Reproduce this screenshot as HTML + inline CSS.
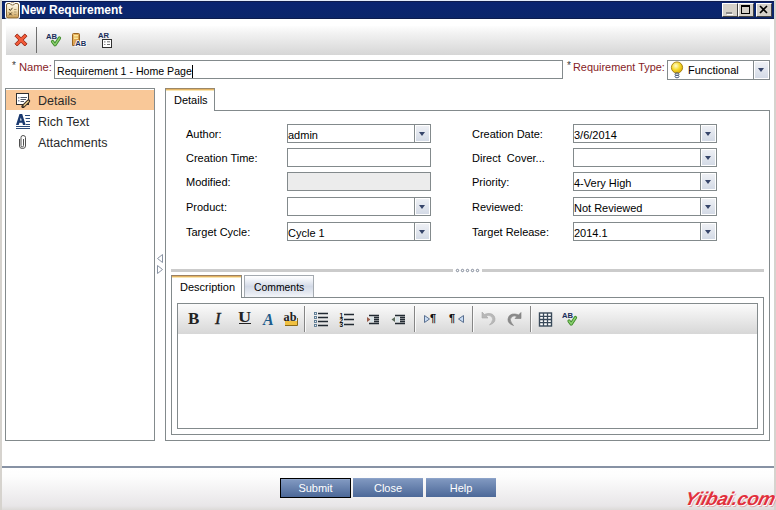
<!DOCTYPE html>
<html><head><meta charset="utf-8">
<style>
*{box-sizing:border-box;margin:0;padding:0}
html,body{width:776px;height:510px;overflow:hidden;background:#fff}
body{position:relative;font-family:"Liberation Sans",sans-serif;font-size:11px;color:#000}
.a{position:absolute}
.t{position:absolute;white-space:pre;line-height:11px}
.box{position:absolute;border:1px solid #838a8c;background:#fff}
.dd{position:absolute;top:0;right:0;width:16px;height:100%;border-left:1px solid #838a8c;background:linear-gradient(#f0f2f6,#d2d9e5);box-shadow:inset 0 0 0 1px #fff}
.dd:after{content:"";position:absolute;left:4px;top:7px;border-left:3.5px solid transparent;border-right:3.5px solid transparent;border-top:4px solid #36456a}
.lbl{position:absolute;white-space:pre;line-height:11px;color:#000}
.val{position:absolute;left:0px;top:5px;white-space:pre;line-height:11px}
.sep{position:absolute;width:1px;background:#6e6e6e}
.btn{position:absolute;top:478px;height:19px;width:70px;background:linear-gradient(#98acd0 0,#8098c0 1px,#4c6898);color:#fff;text-align:center;line-height:18px;padding-top:1px;font-size:11px}
</style></head><body>
<!-- window frame -->
<div class="a" style="left:0;top:0;width:2px;height:510px;background:#d6d3ce"></div>
<div class="a" style="left:774px;top:0;width:2px;height:510px;background:#d6d3ce"></div>
<!-- title bar -->
<div class="a" style="left:2px;top:0;width:772px;height:1px;background:#e4ecfa"></div>
<div class="a" style="left:2px;top:1px;width:772px;height:18px;background:linear-gradient(#101c4c 0,#101c4c 1px,#0a2470 1px,#0a2470 3px,#0b266a 17px,#0c1c4c 17px)"></div>
<div class="a" style="left:5px;top:2px;width:15px;height:16px;border:1px solid #fff;border-radius:2px;background:linear-gradient(#f4e8c8,#c8a868)"></div>
<div class="t" style="left:21px;top:4px;color:#fff;font-weight:bold;font-size:12px;line-height:12px">New Requirement</div>
<div class="a" style="left:722px;top:3px;width:16px;height:14px;background:#d4d0c8;border:1px solid;border-color:#fff #404040 #404040 #fff"></div>
<div class="a" style="left:738px;top:3px;width:16px;height:14px;background:#d4d0c8;border:1px solid;border-color:#fff #404040 #404040 #fff"></div>
<div class="a" style="left:756px;top:3px;width:16px;height:14px;background:#d4d0c8;border:1px solid;border-color:#fff #404040 #404040 #fff"></div>

<!-- toolbar -->
<div class="a" style="left:6px;top:26px;width:764px;height:29px;background:linear-gradient(#fdfdfd,#f2f2f2 25%,#d6d6d6)"></div>
<div class="sep" style="left:36px;top:27px;height:26px"></div>

<!-- name row -->
<div class="t" style="left:12px;top:61px;font-size:10px;line-height:9px;color:#3a3a3a">*</div><div class="t" style="left:19px;top:62px;color:#861c26;font-size:11.2px;line-height:11px">Name:</div>
<div class="box" style="left:54px;top:60px;width:509px;height:19px"><div class="val" style="left:2px;top:4px;font-size:10.6px">Requirement 1 - Home Page<span style="display:inline-block;width:1px;height:13px;background:#000;vertical-align:-3px;margin-left:0.5px"></span></div></div>
<div class="t" style="left:567px;top:61px;font-size:10px;line-height:9px;color:#3a3a3a">*</div><div class="t" style="left:573px;top:62px;color:#861c26;font-size:10.9px;line-height:11px">Requirement Type:</div>
<div class="box" style="left:667px;top:60px;width:103px;height:20px"><div class="val" style="left:20px;top:4px">Functional</div><div class="dd"></div></div>

<!-- left panel -->
<div class="box" style="left:5px;top:88px;width:150px;height:353px"></div>
<div class="a" style="left:6px;top:90px;width:148px;height:20px;background:#f9c898"></div>
<div class="t" style="left:38px;top:95px;font-size:12.5px;line-height:12px;color:#2a2a2a">Details</div>
<div class="t" style="left:38px;top:116px;font-size:12.5px;line-height:12px;color:#2a2a2a">Rich Text</div>
<div class="t" style="left:38px;top:137px;font-size:12.5px;line-height:12px;color:#2a2a2a">Attachments</div>

<!-- content panel -->
<div class="a" style="left:165px;top:110px;width:605px;height:331px;border:1px solid #838a8c"></div>
<div class="a" style="left:165px;top:88px;width:50px;height:23px;border:1px solid #838a8c;border-bottom:none;border-top-color:#9c8868;background:#fff;box-shadow:inset 0 1px 0 #e4b464,inset 0 2px 0 #f8e6b4"></div>
<div class="t" style="left:174px;top:95px">Details</div>

<!-- title icons -->
<svg class="a" style="left:4px;top:1px" width="17" height="18" viewBox="0 0 17 18">
<rect x="1" y="1" width="15" height="17" rx="2.5" fill="#fff"/>
<defs><linearGradient id="cg" x1="0" y1="0" x2="0" y2="1"><stop offset="0" stop-color="#fffaf0"/><stop offset="0.5" stop-color="#f0dcb0"/><stop offset="1" stop-color="#c89a50"/></linearGradient></defs>
<path d="M2.5 4 Q2.5 2.5 4 2.5 L6 2.5 Q6.5 4 8.5 4 Q10.5 4 11 2.5 L13 2.5 Q14.5 2.5 14.5 4 L14.5 15.5 Q14.5 17 13 17 L4 17 Q2.5 17 2.5 15.5 Z" fill="url(#cg)" stroke="#7a5a28" stroke-width="0.9"/>
<path d="M6.2 2.5 Q6.5 1.5 8.5 1.5 Q10.5 1.5 10.8 2.5" fill="#fff" stroke="#7a5a28" stroke-width="0.6"/>
<path d="M5 8 L6.3 9.5 L8.5 6.8 M5 11.5 L7.8 14.3 M7.8 11.5 L5 14.3" stroke="#4a3a20" stroke-width="1" fill="none"/>
<path d="M10 8.5 H12.5 M10 11 H12.5 M10 13.5 H12.5" stroke="#b09a70" stroke-width="1"/>
</svg>
<svg class="a" style="left:722px;top:3px" width="16" height="14" viewBox="0 0 16 14"><rect x="4" y="9" width="6" height="2" fill="#8c8c8c"/><rect x="5" y="11" width="6" height="1" fill="#fff"/></svg>
<svg class="a" style="left:738px;top:3px" width="16" height="14" viewBox="0 0 16 14"><rect x="3.5" y="2.5" width="8" height="8" fill="none" stroke="#000"/><rect x="3" y="2" width="9" height="2" fill="#000"/></svg>
<svg class="a" style="left:756px;top:3px" width="16" height="14" viewBox="0 0 16 14"><path d="M4 3 L11 10 M11 3 L4 10" stroke="#000" stroke-width="1.6"/></svg>

<!-- toolbar icons -->
<svg class="a" style="left:13px;top:32px" width="16" height="16" viewBox="0 0 16 16">
<path d="M2 4.2 L4.2 2 L8 5.8 L11.8 2 L14 4.2 L10.2 8 L14 11.8 L11.8 14 L8 10.2 L4.2 14 L2 11.8 L5.8 8 Z" fill="#f25a38" stroke="#9a2a18" stroke-width="1" stroke-linejoin="round"/>
</svg>
<svg class="a" style="left:44px;top:30px" width="20" height="20" viewBox="0 0 20 20">
<text x="2" y="8.8" font-family="Liberation Sans" font-size="7.6" font-weight="bold" fill="#1a2e5a" textLength="11" lengthAdjust="spacingAndGlyphs">AB</text>
<path d="M8.5 11.5 L11 14.8 L15.5 8" fill="none" stroke="#3c8a28" stroke-width="3.2" stroke-linecap="round" stroke-linejoin="round"/>
<path d="M8.5 11.5 L11 14.8 L15.5 8" fill="none" stroke="#8cd070" stroke-width="1.4" stroke-linecap="round" stroke-linejoin="round"/>
</svg>
<svg class="a" style="left:68px;top:30px" width="20" height="20" viewBox="0 0 20 20">
<defs><linearGradient id="dg" x1="0" y1="0" x2="1" y2="1"><stop offset="0" stop-color="#f0c070"/><stop offset="1" stop-color="#c88830"/></linearGradient></defs>
<path d="M4.5 15.5 L4.5 4.5 Q4.5 3.5 5.5 3.5 L10.5 3.5 Q11.5 3.5 11.5 4.5 L11.5 15.5 Z" fill="url(#dg)" stroke="#9a6420" stroke-width="1"/>
<path d="M6 5.5 H10 M6 7 H10 M6 8.5 H10" stroke="#fff0a0" stroke-width="0.9"/>
<text x="7.2" y="16.2" font-family="Liberation Sans" font-size="7.6" font-weight="bold" fill="#1a2e5a" stroke="#fff" stroke-width="1.6" paint-order="stroke" textLength="11" lengthAdjust="spacingAndGlyphs">AB</text>
</svg>
<svg class="a" style="left:95px;top:30px" width="20" height="20" viewBox="0 0 20 20">
<text x="3" y="7.8" font-family="Liberation Sans" font-size="7" font-weight="bold" fill="#1a2e5a" textLength="11" lengthAdjust="spacingAndGlyphs">AR</text>
<rect x="7.5" y="9.5" width="9" height="8" fill="#fff" stroke="#303030" stroke-width="1"/>
<path d="M9 11.8 H10.5 M9 14.5 H10.5" stroke="#909090" stroke-width="1.2"/>
<path d="M12 11.8 H15 M12 14.5 H15" stroke="#707070" stroke-width="1"/>
</svg>

<!-- left panel icons -->
<svg class="a" style="left:15px;top:92px" width="16" height="16" viewBox="0 0 16 16">
<rect x="1.5" y="1.5" width="12" height="11" fill="#fff" stroke="#303030" stroke-width="1"/>
<rect x="3" y="5" width="1.5" height="1.5" fill="#8a94a8"/><rect x="3" y="8" width="1.5" height="1.5" fill="#8a94a8"/>
<path d="M5.5 5.5 H12 M5.5 7.5 H11 M5.5 9.5 H9" stroke="#404a5a" stroke-width="0.9"/>
<path d="M8 14.5 L13.5 9" stroke="#3a2a20" stroke-width="3.2" stroke-linecap="round"/>
<path d="M8.3 14.2 L13.3 9.2" stroke="#e8d090" stroke-width="1.4" stroke-linecap="round"/>
<path d="M7 15.5 L8.2 13.2 L9.2 14.2 Z" fill="#202020"/>
</svg>
<svg class="a" style="left:15px;top:113px" width="16" height="16" viewBox="0 0 16 16">
<path d="M1 12 L4.5 1 L7.2 1 L10.7 12 L8 12 L7.3 9.8 L4.4 9.8 L3.7 12 Z M5 7.6 L6.7 7.6 L5.85 4.6 Z" fill="#1a3a70" fill-rule="evenodd"/>
<path d="M10 2.5 H15 M10.5 5.5 H15 M11 8.5 H15 M11 11.5 H15" stroke="#2a4a7a" stroke-width="1"/>
<path d="M1 13.5 H15 M1 15.5 H15" stroke="#2a4a7a" stroke-width="1"/>
</svg>
<svg class="a" style="left:17px;top:134px" width="11" height="16" viewBox="0 0 11 16">
<path d="M6.5 5 L6.5 11.5 Q6.5 13 5.2 13 Q4 13 4 11.5 L4 3.5 Q4 1.5 6 1.5 Q8.5 1.5 8.5 3.5 L8.5 12 Q8.5 14.5 5.5 14.5 Q2.5 14.5 2.5 12 L2.5 5" fill="none" stroke="#505050" stroke-width="1"/>
</svg>

<!-- bulb -->
<svg class="a" style="left:670px;top:61px" width="15" height="18" viewBox="0 0 15 18">
<defs><radialGradient id="bg" cx="0.4" cy="0.35" r="0.7"><stop offset="0" stop-color="#fffbd0"/><stop offset="0.5" stop-color="#f8dc30"/><stop offset="1" stop-color="#d8a800"/></radialGradient></defs>
<circle cx="7" cy="6.5" r="5.6" fill="url(#bg)" stroke="#a07a10" stroke-width="0.9"/>
<ellipse cx="7" cy="13.2" rx="2" ry="1.3" fill="none" stroke="#4a5a7a" stroke-width="1"/>
<ellipse cx="7" cy="15.5" rx="2" ry="1.3" fill="none" stroke="#4a5a7a" stroke-width="1"/>
</svg>

<!-- form -->
<div class="lbl" style="left:186px;top:129px">Author:</div>
<div class="box" style="left:287px;top:124px;width:144px;height:19px;"><div class="val">admin</div><div class="dd"></div></div>
<div class="lbl" style="left:186px;top:153px">Creation Time:</div>
<div class="box" style="left:287px;top:148px;width:144px;height:19px;"></div>
<div class="lbl" style="left:186px;top:177px">Modified:</div>
<div class="box" style="left:287px;top:172px;width:144px;height:19px;background:#ececec;"></div>
<div class="lbl" style="left:186px;top:202px">Product:</div>
<div class="box" style="left:287px;top:197px;width:144px;height:19px;"><div class="dd"></div></div>
<div class="lbl" style="left:186px;top:227px">Target Cycle:</div>
<div class="box" style="left:287px;top:222px;width:144px;height:19px;"><div class="val">Cycle 1</div><div class="dd"></div></div>
<div class="lbl" style="left:472px;top:129px">Creation Date:</div>
<div class="box" style="left:573px;top:124px;width:144px;height:19px"><div class="val">3/6/2014</div><div class="dd"></div></div>
<div class="lbl" style="left:472px;top:153px">Direct  Cover...</div>
<div class="box" style="left:573px;top:148px;width:144px;height:19px"><div class="dd"></div></div>
<div class="lbl" style="left:472px;top:177px">Priority:</div>
<div class="box" style="left:573px;top:172px;width:144px;height:19px"><div class="val">4-Very High</div><div class="dd"></div></div>
<div class="lbl" style="left:472px;top:202px">Reviewed:</div>
<div class="box" style="left:573px;top:197px;width:144px;height:19px"><div class="val">Not Reviewed</div><div class="dd"></div></div>
<div class="lbl" style="left:472px;top:227px">Target Release:</div>
<div class="box" style="left:573px;top:222px;width:144px;height:19px"><div class="val">2014.1</div><div class="dd"></div></div>

<!-- splitter -->
<svg class="a" style="left:156px;top:253px" width="8" height="22" viewBox="0 0 8 22"><path d="M6.5 1.5 L1.5 5.5 L6.5 9.5 Z M1.5 12.5 L6.5 16.5 L1.5 20.5 Z" fill="none" stroke="#8a94a4" stroke-width="1"/></svg>
<div class="a" style="left:171px;top:269px;width:282px;height:3px;background:#cbcbcb"></div>
<div class="a" style="left:482px;top:269px;width:282px;height:3px;background:#cbcbcb"></div>
<svg class="a" style="left:455px;top:268px" width="26" height="6" viewBox="0 0 26 6"><g fill="none" stroke="#7c8494" stroke-width="1"><circle cx="2.5" cy="2.5" r="1.2"/><circle cx="7.5" cy="2.5" r="1.2"/><circle cx="12.5" cy="2.5" r="1.2"/><circle cx="17.5" cy="2.5" r="1.2"/><circle cx="22.5" cy="2.5" r="1.2"/></g></svg>

<!-- lower tabs -->
<div class="a" style="left:171px;top:297px;width:593px;height:138px;border:1px solid #838a8c"></div>
<div class="a" style="left:244px;top:275px;width:70px;height:22px;border:1px solid #a4aab0;border-bottom:none;background:linear-gradient(#ffffff 0%,#f4f6fa 15%,#d2d9e6 50%,#e8ecf3 85%,#f4f6f9 100%)"></div>
<div class="a" style="left:171px;top:275px;width:71px;height:23px;border:1px solid #838a8c;border-bottom:none;border-top-color:#9c8060;background:#fff;box-shadow:inset 0 1px 0 #e4b464,inset 0 2px 0 #f8e6b4"></div>
<div class="t" style="left:180px;top:282px">Description</div>
<div class="t" style="left:254px;top:282px;font-size:10.4px">Comments</div>
<div class="a" style="left:177px;top:303px;width:581px;height:126px;border:1px solid #838a8c"></div>
<div class="a" style="left:178px;top:304px;width:579px;height:30px;background:linear-gradient(#fbfbfb,#d7d7d7)"></div>
<div class="sep" style="left:304px;top:306px;height:26px;background:#858585;box-shadow:1px 0 0 #fafafa"></div>
<div class="sep" style="left:414px;top:306px;height:26px;background:#858585;box-shadow:1px 0 0 #fafafa"></div>
<div class="sep" style="left:472px;top:306px;height:26px;background:#858585;box-shadow:1px 0 0 #fafafa"></div>
<div class="sep" style="left:530px;top:306px;height:26px;background:#858585;box-shadow:1px 0 0 #fafafa"></div>

<!-- editor toolbar icons -->
<div class="t" style="left:188px;top:310px;font-family:'Liberation Serif',serif;font-weight:bold;font-size:17px;line-height:17px;color:#222">B</div>
<div class="t" style="left:215px;top:310px;font-family:'Liberation Serif',serif;font-style:italic;font-size:17px;line-height:17px;color:#222;-webkit-text-stroke:0.4px #222">I</div>
<div class="t" style="left:238px;top:310px;font-family:'Liberation Serif',serif;font-weight:bold;font-size:14px;line-height:16px;color:#222;transform:scaleX(1.3);transform-origin:0 0">U</div>
<div class="a" style="left:239px;top:323px;width:12px;height:1px;background:#222"></div>
<div class="t" style="left:263px;top:311px;font-family:'Liberation Serif',serif;font-weight:bold;font-style:italic;font-size:16px;line-height:17px;color:#1c5c8c">A</div>
<svg class="a" style="left:282px;top:310px" width="18" height="17" viewBox="0 0 18 17">
<path d="M3.5 11.5 H15.5 V8" fill="none" stroke="#a07818" stroke-width="1"/>
<rect x="3" y="11" width="12" height="4" fill="#f0c040"/>
<path d="M15.5 8 V15.5 H3" fill="none" stroke="#8a6a18" stroke-width="1"/>
<text x="1.5" y="10.5" font-family="Liberation Serif" font-weight="bold" font-size="12" fill="#222" textLength="13" lengthAdjust="spacingAndGlyphs">ab</text>
</svg>
<svg class="a" style="left:312px;top:311px" width="18" height="17" viewBox="0 0 18 17">
<g fill="#e4eef6" stroke="#5a7890" stroke-width="0.9"><rect x="2.5" y="1.5" width="2" height="2"/><rect x="2.5" y="5.5" width="2" height="2"/><rect x="2.5" y="9.5" width="2" height="2"/><rect x="2.5" y="13.5" width="2" height="2"/></g>
<path d="M6 2.5 H16 M6 6.5 H16 M6 10.5 H16 M6 14.5 H16" stroke="#222a32" stroke-width="1.5"/>
</svg>
<svg class="a" style="left:338px;top:311px" width="18" height="17" viewBox="0 0 18 17">
<text x="1.5" y="6.5" font-family="Liberation Sans" font-weight="bold" font-size="6.5" fill="#111">1</text>
<text x="1.5" y="11.5" font-family="Liberation Sans" font-weight="bold" font-size="6.5" fill="#111">2</text>
<text x="1.5" y="16.3" font-family="Liberation Sans" font-weight="bold" font-size="6.5" fill="#111">3</text>
<path d="M6 3.5 H16 M6 8.5 H16 M6 13.5 H16" stroke="#222a32" stroke-width="1.5"/>
</svg>
<svg class="a" style="left:365px;top:312px" width="16" height="14" viewBox="0 0 16 14">
<path d="M4 3.5 H14 M9 5.5 H14 M9 7.5 H14 M9 9.5 H14 M4 11.5 H14" stroke="#222a32" stroke-width="1.3"/>
<path d="M2 5 L5.5 7.5 L2 10 Z" fill="#985a48"/>
<rect x="5.5" y="5" width="3" height="5" fill="#d8e4e8"/>
</svg>
<svg class="a" style="left:390px;top:312px" width="16" height="14" viewBox="0 0 16 14">
<path d="M5 3.5 H15 M10 5.5 H15 M10 7.5 H15 M10 9.5 H15 M5 11.5 H15" stroke="#222a32" stroke-width="1.3"/>
<path d="M5 5 L1.5 7.5 L5 10 Z" fill="#5a6a5a"/>
<rect x="6" y="5" width="3" height="5" fill="#d8e4e8"/>
</svg>
<svg class="a" style="left:422px;top:313px" width="9" height="12" viewBox="0 0 9 12">
<path d="M2.5 2.5 L7.5 6 L2.5 9.5 Z" fill="#c8dcf4" stroke="#5a7090" stroke-width="1"/></svg>
<div class="t" style="left:430px;top:313px;font-weight:bold;font-size:11px;line-height:11px;color:#111">&para;</div>
<div class="t" style="left:449px;top:313px;font-weight:bold;font-size:11px;line-height:11px;color:#111">&para;</div>
<svg class="a" style="left:457px;top:313px" width="9" height="12" viewBox="0 0 9 12">
<path d="M6.5 2.5 L1.5 6 L6.5 9.5 Z" fill="#c8dcf4" stroke="#5a7090" stroke-width="1"/></svg>
<svg class="a" style="left:480px;top:310px" width="17" height="17" viewBox="0 0 17 17">
<path d="M2 2 L2 8 L8 8 L6 6 Q9 4.5 11.5 6.5 Q14 9 11.5 12.5 L9.5 15 Q15.5 13 15 8.5 Q14 3 8 3.5 Q5.5 3.8 4.5 4.5 Z" fill="#b8b8b8" stroke="#a8a8a8" stroke-width="0.6"/>
</svg>
<svg class="a" style="left:506px;top:310px" width="17" height="17" viewBox="0 0 17 17">
<path d="M15 2.5 L15 8.5 L9 8.5 L11 6.5 Q8 5 5.5 7 Q3 9.5 5.5 13 L7.5 15.5 Q1.5 13.5 2 9 Q3 3.5 9 4 Q11.5 4.3 12.5 5 Z" fill="#8a8a8a" stroke="#7a7a7a" stroke-width="0.6"/>
</svg>
<svg class="a" style="left:538px;top:312px" width="15" height="15" viewBox="0 0 15 15">
<rect x="1.5" y="1" width="12" height="13" fill="#fff" stroke="#3a4a5a" stroke-width="1.4"/>
<path d="M1.5 4.3 H13.5 M1.5 7.5 H13.5 M1.5 10.7 H13.5 M5.5 1 V14 M9.5 1 V14" stroke="#3a4a5a" stroke-width="1.3"/>
</svg>
<svg class="a" style="left:560px;top:309px" width="20" height="20" viewBox="0 0 20 20">
<text x="2" y="8.8" font-family="Liberation Sans" font-size="7.6" font-weight="bold" fill="#1a2e5a" textLength="11" lengthAdjust="spacingAndGlyphs">AB</text>
<path d="M9 12 L11.2 15 L15.5 8.5" fill="none" stroke="#3c8a28" stroke-width="3.2" stroke-linecap="round" stroke-linejoin="round"/>
<path d="M9 12 L11.2 15 L15.5 8.5" fill="none" stroke="#8cd070" stroke-width="1.4" stroke-linecap="round" stroke-linejoin="round"/>
</svg>

<!-- bottom -->
<div class="a" style="left:2px;top:466px;width:772px;height:2px;background:#8792a4"></div>
<div class="a" style="left:2px;top:468px;width:772px;height:42px;background:linear-gradient(#fff 0%,#fdfdfd 20%,#e8e6e8 90%,#dcdad8 100%)"></div>
<div class="btn" style="left:280px;width:71px;height:20px;border:1px solid #000;line-height:18px;padding-top:0">Submit</div>
<div class="btn" style="left:353px">Close</div>
<div class="btn" style="left:426px">Help</div>
<!-- watermark -->
<div class="t" style="left:683px;top:489px;font-family:'Liberation Sans',sans-serif;font-weight:bold;font-style:italic;font-size:18.5px;line-height:19px;color:#e2303c;text-shadow:1px 1px 0 #fff,2px 2px 0 rgba(200,60,60,0.35);letter-spacing:-0.2px;transform-origin:0 100%;transform:skewX(-14deg)">Yiibai.com</div>
</body></html>
